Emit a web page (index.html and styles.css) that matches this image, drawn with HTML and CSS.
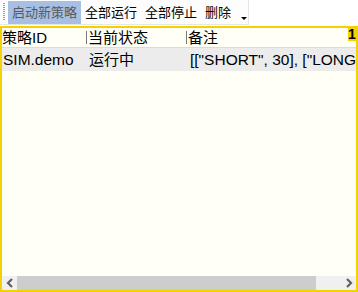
FILE: index.html
```html
<!DOCTYPE html>
<html>
<head>
<meta charset="utf-8">
<link rel="stylesheet" href="styles.css">
</head>
<body>
<div class="toolbar">
  <div class="grip"></div>
  <div class="tbtn active">启动新策略</div>
  <div class="tbtn">全部运行</div>
  <div class="tbtn">全部停止</div>
  <div class="tbtn">删除</div>
  <div class="drop"><svg width="6" height="4" viewBox="0 0 6 4"><polygon points="0,0 6,0 3,3" fill="#000"/></svg></div>
</div>
<div class="panel">
  <div class="badge">1</div>
  <div class="table">
    <div class="hrow">
      <div class="hcell c1">策略ID</div>
      <div class="hcell c2"><span class="sep"></span>当前状态</div>
      <div class="hcell c3"><span class="sep"></span>备注</div>
    </div>
    <div class="row">
      <div class="cell c1">SIM.demo</div>
      <div class="cell c2 cn">运行中</div>
      <div class="cell c3">[["SHORT", 30], ["LONG", 30]]</div>
    </div>
  </div>
  <div class="hscroll">
    <div class="arrow"><svg width="8" height="10" viewBox="0 0 8 10"><polyline points="6,1 2,5 6,9" fill="none" stroke="#606060" stroke-width="2.2"/></svg></div>
    <div class="thumb"></div>
    <div class="track"></div>
    <div class="arrow"><svg width="8" height="10" viewBox="0 0 8 10"><polyline points="2,1 6,5 2,9" fill="none" stroke="#606060" stroke-width="2.2"/></svg></div>
  </div>
</div>
</body>
</html>
```
FILE: styles.css
```css
html, body {
  margin: 0;
  padding: 0;
  background: #ffffff;
}
body {
  width: 358px;
  height: 292px;
  overflow: hidden;
  font-family: "Liberation Sans", "Noto Sans CJK SC", sans-serif;
  color: #000;
}
.toolbar {
  display: flex;
  align-items: center;
  width: 249px;
  height: 25px;
  box-sizing: border-box;
  border-right: 1px solid #e6e6e6;
  border-bottom: 1px solid #e6e6e6;
  background: #fdfdfd;
  font-size: 13px;
}
.grip {
  width: 2px;
  height: 18px;
  margin-left: 3px;
  margin-right: 3px;
  background-image: linear-gradient(#9a9a9a 50%, transparent 50%);
  background-size: 2px 2px;
}
.tbtn {
  height: 23px;
  line-height: 23px;
  padding: 0 4px;
  white-space: nowrap;
}
.tbtn.active {
  background: #a7bfe3;
  color: #555a60;
}
.drop {
  display: flex;
  align-items: flex-end;
  height: 23px;
  padding: 0 0 3px 6px;
  box-sizing: border-box;
}
.panel {
  position: relative;
  margin-top: 1px;
  height: 266px;
  box-sizing: border-box;
  border: 2px solid #f2d200;
  background: #fffff5;
  display: flex;
  flex-direction: column;
  overflow: hidden;
}
.badge {
  position: absolute;
  top: 0;
  right: 0;
  width: 8px;
  height: 13px;
  line-height: 13px;
  background: #f2d200;
  font-weight: bold;
  font-size: 14px;
  text-align: center;
  z-index: 2;
}
.table {
  flex: 1;
  font-size: 15px;
}
.hrow, .row {
  display: grid;
  grid-template-columns: 84px 100px 200px;
  white-space: nowrap;
}
.hrow {
  height: 19px;
  line-height: 19px;
  border-bottom: 1px solid #dedcd0;
}
.row {
  height: 23px;
  line-height: 23px;
  background: #ececec;
  overflow: hidden;
  font-size: 15.5px;
}
.hcell, .cell {
  overflow: hidden;
  display: flex;
  align-items: center;
}
.cell.c1 { padding-left: 1px; }
.cell.c2 { padding-left: 3px; font-size: 15px; }
.cell.c3 { padding-left: 4px; overflow: visible; }
.sep {
  display: inline-block;
  width: 1px;
  height: 13px;
  background: #7a7a7a;
  margin-right: 1px;
}
.hscroll {
  display: flex;
  height: 14px;
  background: #f0f0f0;
}
.arrow {
  width: 15px;
  display: flex;
  align-items: center;
  justify-content: center;
}
.thumb {
  width: 299px;
  background: #cdcdcd;
}
.track {
  flex: 1;
}
```
